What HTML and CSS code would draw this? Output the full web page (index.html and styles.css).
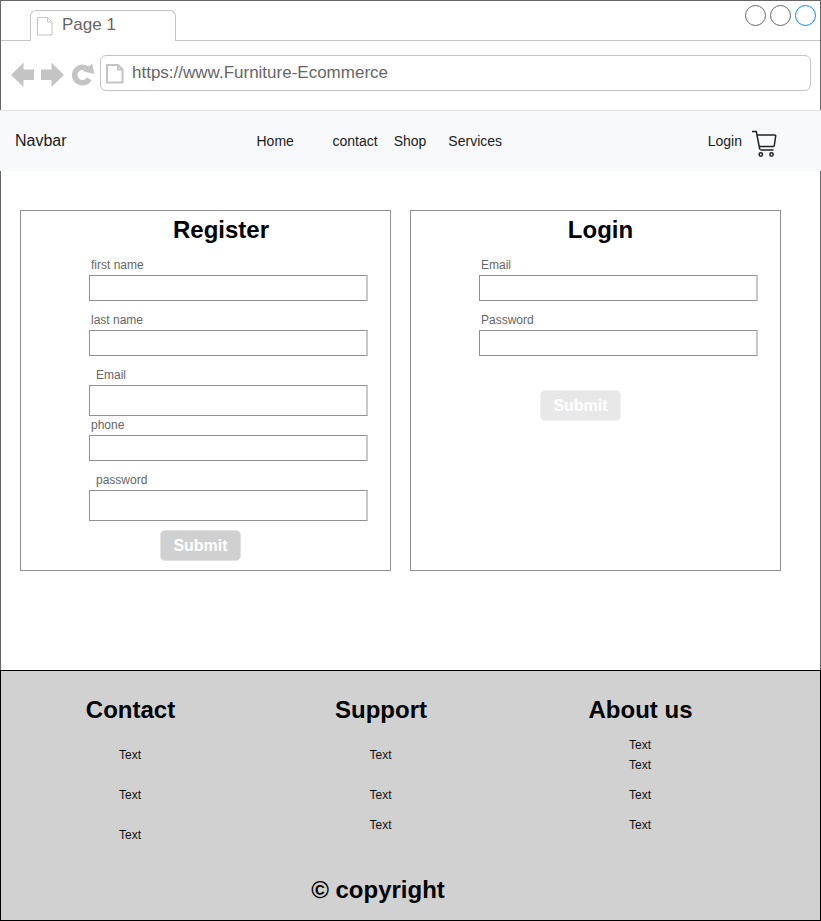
FILE: index.html
```html
<!DOCTYPE html>
<html lang="en">
<head>
<meta charset="utf-8">
<title>Furniture-Ecommerce</title>
<link rel="stylesheet" href="styles.css">
</head>
<body>
<div class="window">
  <header class="tabs">
    <div class="tab">
      <svg class="tab-icon" width="18" height="21" viewBox="0 0 18 21"><path d="M1.5 1.5h10l4.500 4.500v13h-14.500zM11.500 1.500v4.500h4.500"/></svg>
      <span>Page 1</span>
    </div>
    <svg class="controls" width="74" height="24" viewBox="0 0 74 24">
      <circle cx="12.500" cy="12.500" r="10"/><circle cx="37.500" cy="12.500" r="10"/><circle class="active" cx="62.500" cy="12.500" r="10"/>
    </svg>
  </header>
  <div class="toolbar">
    <svg class="history" width="88" height="30" viewBox="0 0 88 30">
      <path d="M0 15 12.500 2.500V9.500H23V20H12.500V27zM53 15 40.500 2.500V9.500H30V20H40.500V27z"/>
      <path class="reload" d="M76.800 9.300A7.800 7.800 0 1 0 78.300 18.900"/>
      <path d="M81.300 3.500 83.200 14 72 11.300z"/>
    </svg>
    <div class="address">
      <svg class="page-icon" width="20" height="22" viewBox="0 0 20 22"><path d="M2 2h11l4.500 4.500v13H2zM13 2v4.500h4.500"/></svg>
      <span>https://www.Furniture-Ecommerce</span>
    </div>
  </div>
  <nav class="navbar">
    <a class="brand">Navbar</a>
    <div class="links"><a class="home">Home</a><a>contact</a><a>Shop</a><a class="services">Services</a></div>
    <div class="account">
      <a>Login</a>
      <svg class="cart" width="27" height="28" viewBox="0 0 27 28">
        <path d="M1 1.500h4.300L8.600 18.500M6.300 5h17.500q1 0 .900 1l-1.400 9.300q-.200 1.300-1.500 1.300H8.300M8.600 18.500q.200 1.500 1.600 1.500h12.300"/>
        <circle cx="9.800" cy="24.500" r="1.700"/><circle cx="20.500" cy="24.500" r="1.700"/>
      </svg>
    </div>
  </nav>
  <main class="forms">
    <form class="card">
      <h2>Register</h2>
      <div class="field"><label for="first">first name</label><input id="first"></div>
      <div class="field"><label for="last">last name</label><input id="last"></div>
      <div class="field tall"><label for="email">Email</label><input id="email"></div>
      <div class="field"><label for="phone">phone</label><input id="phone"></div>
      <div class="field tall"><label for="password">password</label><input id="password" type="password"></div>
      <button type="button">Submit</button>
    </form>
    <form class="card login">
      <h2>Login</h2>
      <div class="field"><label for="login-email">Email</label><input id="login-email"></div>
      <div class="field"><label for="login-password">Password</label><input id="login-password" type="password"></div>
      <button type="button">Submit</button>
    </form>
  </main>
  <footer>
    <div class="columns">
      <section class="contact"><h2>Contact</h2><p>Text</p><p>Text</p><p>Text</p></section>
      <section class="support"><h2>Support</h2><p>Text</p><p>Text</p><p>Text</p></section>
      <section class="about"><h2>About us</h2><p>Text</p><p>Text</p><p>Text</p><p>Text</p></section>
    </div>
    <div class="copyright">© copyright</div>
  </footer>
</div>
</body>
</html>
```
FILE: styles.css
```css
* { box-sizing: border-box; }
body { margin: 0; font-family: "Liberation Sans", Arial, sans-serif; background: #fff; color: #000; }
h2, p { margin: 0; }
svg { display: block; flex: none; fill: none; }
.window { width: 821px; height: 921px; display: flex; flex-direction: column; overflow: hidden; border-top: 1px solid #666; }

.tabs { height: 40px; flex: none; display: flex; justify-content: space-between; padding: 9px 3px 0 29px; border: solid #666; border-width: 0 1px; box-shadow: inset 0 -1px #c4c4c4; }
.tab { width: 146px; height: 31px; display: flex; padding: 5px 0 0 5px; background: #fff; border: 1px solid #c4c4c4; border-bottom: 0; border-radius: 6px 6px 0 0; color: #666; font-size: 17px; line-height: 18px; }
.tab span { margin-left: 8px; }
.tab-icon { stroke: #c4c4c4; }
.controls { margin-top: -7px; stroke: #666; }
.controls .active { stroke: #008cff; }

.toolbar { height: 69px; flex: none; display: flex; padding: 14px 9px 0 10px; border: solid #666; border-width: 0 1px; }
.history { margin-top: 5px; margin-right: 1px; fill: #c4c4c4; }
.history .reload { fill: none; stroke: #c4c4c4; stroke-width: 5.5; }
.address { flex: 1; height: 36px; display: flex; padding: 7px 0 0 4px; border: 1px solid #c4c4c4; border-radius: 6px; color: #666; font-size: 17px; line-height: 20px; }
.page-icon { stroke: #c4c4c4; stroke-width: 2; }
.address span { margin-left: 7px; }

.navbar { height: 61px; flex: none; display: flex; align-items: center; padding: 0 43px 1px 15px; border-top: 1px solid #dfdfdf; background: #f8f9fb; color: #1a1a1a; font-size: 14px; }
.brand { width: 241.5px; font-size: 16px; }
.links { display: flex; gap: 16px; }
.home { width: 60px; }
.services { margin-left: 6px; }
.account { margin-left: auto; display: flex; align-items: center; gap: 9px; height: 28px; }
.cart { margin-top: 7px; stroke: #222; stroke-width: 1.5; }

.forms { flex: 1; display: flex; align-items: flex-start; gap: 19px; padding: 39px 0 0 19px; border: solid #666; border-width: 0 1px; }
.card { width: 371px; height: 361px; border: 1px solid #919191; padding-left: 68px; }
.card h2 { margin: 0 0 6px -68px; padding-left: 31px; text-align: center; font-size: 24px; line-height: 38px; }
.login h2 { padding-left: 10px; }
.field { margin-bottom: 9px; }
.field label { display: block; height: 20px; padding-left: 2px; color: #666; font-size: 12px; line-height: 20px; }
.field input { display: block; width: 279px; height: 26px; padding: 0 4px; border: 1px solid #919191; border-right: 2px solid #c8c8c8; border-radius: 0; background: #fff; }
.tall { margin-bottom: -1px; }
.tall label { padding-left: 7px; }
.tall input { height: 31px; }
button { display: block; width: 81px; height: 31px; margin: 10px 0 0 71px; padding: 0; border: 1px solid #e2e2e2; border-radius: 5px; background: #d0d0d0; color: #fff; font: bold 16px/29px "Liberation Sans", Arial, sans-serif; }
.login button { margin: 34px 0 0 61px; background: #e8e8e8; border-color: #f1f1f1; }

footer { height: 251px; flex: none; border: 1px solid #000; background: #d1d1d1; }
.columns { display: grid; grid-template-columns: 259px 242px 277px; height: 204px; padding-top: 24px; text-align: center; }
.columns h2 { font-size: 24px; line-height: 30px; }
.columns p { padding-right: 1px; color: #111; font-size: 12px; line-height: 20px; }
.contact p { margin-top: 20px; }
.support p { margin-top: 20px; }
.support p:last-child { margin-top: 10px; }
.about h2 { margin-bottom: 10px; }
.about p:nth-of-type(n+3) { margin-top: 10px; }
.copyright { width: 754px; text-align: center; font-size: 24px; line-height: 30px; font-weight: bold; }
```
